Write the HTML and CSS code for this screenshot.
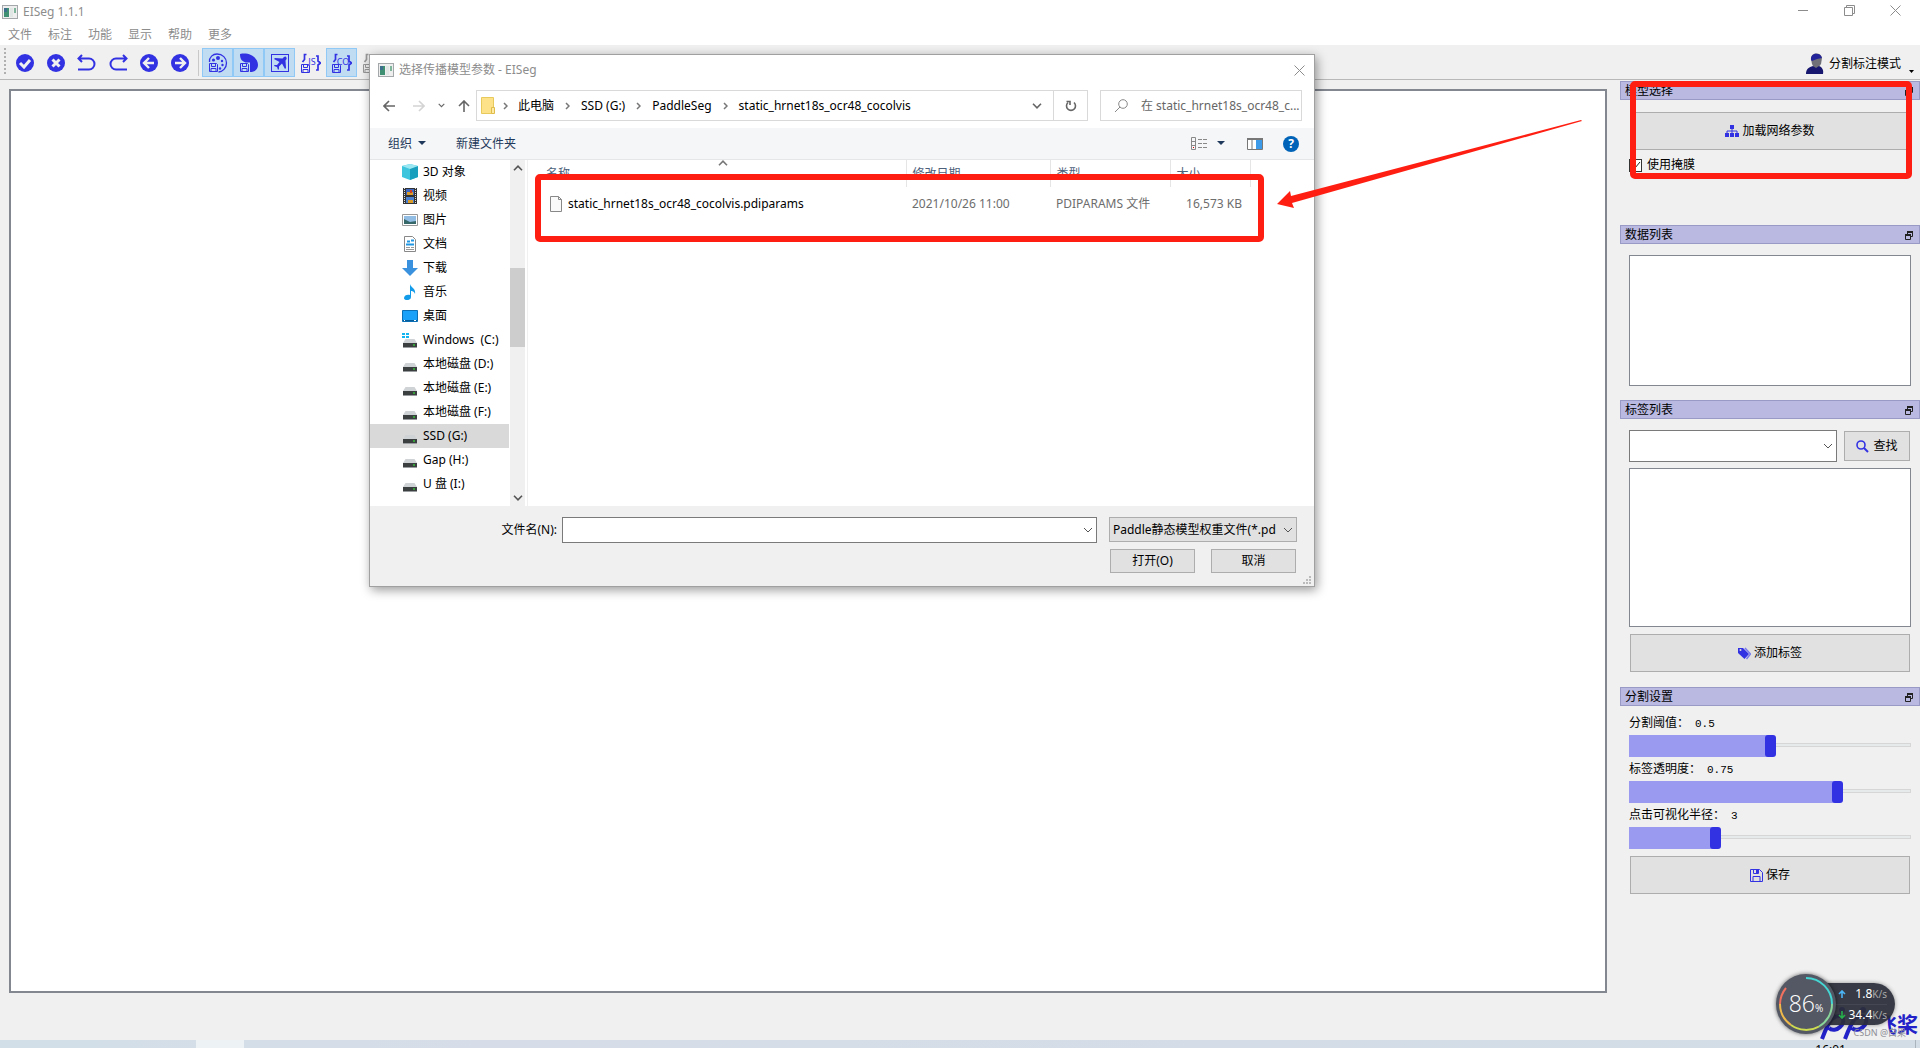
FILE: index.html
```html
<!DOCTYPE html>
<html lang="zh-CN">
<head>
<meta charset="utf-8">
<title>EISeg 1.1.1</title>
<link rel="stylesheet" href="styles.css">
</head>
<body>
<svg class="sprite" aria-hidden="true">
  <symbol id="app" viewBox="0 0 16 14"><rect x=".5" y=".5" width="15" height="13" fill="#eee" stroke="#a4a8ab"/><rect x="2" y="3" width="5" height="9" fill="#3f8f72"/><rect x="2" y="3" width="3" height="4" fill="#3d6f8c"/><rect x="8" y="3" width="3" height="9" fill="#dfe6e4"/><rect x="12" y="3" width="2" height="5" fill="#7fb59b"/></symbol>
  <symbol id="close" viewBox="0 0 11 11"><path d="M.5.5l10 10M10.5.5l-10 10" stroke="#8c8c8c" fill="none"/></symbol>
  <symbol id="ok" viewBox="0 0 18 18"><circle cx="9" cy="9" r="9" fill="#3232e3"/><path d="M4 9l4 4 6-7" stroke="#f0f0f0" stroke-width="3" fill="none"/></symbol>
  <symbol id="no" viewBox="0 0 18 18"><circle cx="9" cy="9" r="9" fill="#3232e3"/><path d="M5.500 5.500l7 7m0-7l-7 7" stroke="#f0f0f0" stroke-width="3" fill="none"/></symbol>
  <symbol id="undo" viewBox="0 0 20 18"><path d="M5 1L1.500 4.500 5 8M2 4.500h10a5.500 5.500 0 0 1 0 11H1" stroke="#3232e3" stroke-width="2" fill="none"/></symbol>
  <symbol id="redo" viewBox="0 0 20 18"><path d="M15 1l3.500 3.500L15 8M18 4.500H8a5.500 5.500 0 0 0 0 11h11" stroke="#3232e3" stroke-width="2" fill="none"/></symbol>
  <symbol id="prev" viewBox="0 0 18 18"><circle cx="9" cy="9" r="9" fill="#3232e3"/><path d="M14 9H5m4-5L4 9l5 5" stroke="#f0f0f0" stroke-width="2.400" fill="none"/></symbol>
  <symbol id="next" viewBox="0 0 18 18"><circle cx="9" cy="9" r="9" fill="#3232e3"/><path d="M4 9h9M9 4l5 5-5 5" stroke="#f0f0f0" stroke-width="2.400" fill="none"/></symbol>
  <symbol id="disk" viewBox="0 0 9 9"><path d="M.5.5h7l1 1v7h-8zM2.500.5v3h4v-3M2 8.500v-3h5v3" fill="none" stroke="currentColor"/></symbol>
  <symbol id="palette" viewBox="0 0 20 20"><path d="M1.500 9C1 4 5 1 9 1c5.500 0 9.500 4 9.500 9s-4 9-8 9" fill="none" stroke="#3232e3" stroke-width="1.300"/><circle cx="5.500" cy="7" r="1.600" fill="#3232e3"/><circle cx="10" cy="5" r="2" fill="#3232e3"/><circle cx="14" cy="8" r="1.200" fill="#3232e3"/><circle cx="14.500" cy="12" r="1.200" fill="#3232e3"/><circle cx="12" cy="15.500" r="1.200" fill="#3232e3"/><use href="#disk" x="1" y="10" width="9" height="9"/></symbol>
  <symbol id="mask" viewBox="0 0 20 20"><path d="M1 1C10-1 19 4 19 12c0 4-3 7-8 7V9.500H6.500C2 8 1 5 1 1z" fill="#3232e3"/><use href="#disk" x="1" y="10" width="9" height="9"/></symbol>
  <symbol id="plane" viewBox="0 0 18 18"><rect x=".5" y=".5" width="17" height="17" fill="none" stroke="#3232e3"/><path d="M15 3c-1-1-2 0-3.500 1.500L4 4 3 5l5.500 3L6 11H3.500L3 12l3 1 1 3 1-1v-2.500L11 9.500 14 15l1-1-.5-7.500C16 5 16 4 15 3z" fill="#3232e3"/></symbol>
  <symbol id="braces" viewBox="0 0 20 20"><path d="M5.500 1.500H3.500v5L1.500 9M15 3h2v5l2.500 2L17 12v5h-2" fill="none" stroke="currentColor" stroke-width="1.700"/><use href="#disk" x="0" y="11" width="9" height="9"/></symbol>
  <symbol id="float" viewBox="0 0 8 9"><path d="M2.500 3V1H7.500v4.500h-2M.5 3.500h5v5h-5z" fill="none" stroke="#222"/><path d="M2 1h6M0 4h6" stroke="#222" stroke-width="2"/></symbol>
  <symbol id="drive" viewBox="0 0 16 16"><path d="M3.500 7h9l2.500 4H1z" fill="#d0d3d6"/><rect x="1" y="11" width="14" height="4" fill="#3c3f40"/><path d="M1 15.500h14" stroke="#9a9d9f"/><rect x="11" y="12.500" width="2" height="1" fill="#3f3"/></symbol>
  <symbol id="sep" viewBox="0 0 5 8"><path d="M1 1l3 3-3 3" fill="none" stroke="#777" stroke-width="1.500"/></symbol>
  <symbol id="down" viewBox="0 0 10 6"><path d="M1 .8l4 4 4-4" fill="none" stroke="currentColor" stroke-width="1.600"/></symbol>
</svg>

<header class="titlebar">
  <svg class="app-icon"><use href="#app"/></svg>
  <span>EISeg 1.1.1</span>
  <div class="window-buttons">
    <button aria-label="最小化"><svg width="11" height="11"><path d="M0 5.500h10" stroke="#8c8c8c"/></svg></button>
    <button aria-label="还原"><svg width="11" height="11"><path d="M2.500 2.500v-2h8v8h-2M.5 2.500h8v8h-8z" stroke="#8c8c8c" fill="none"/></svg></button>
    <button aria-label="关闭"><svg width="11" height="11"><use href="#close"/></svg></button>
  </div>
</header>
<nav class="menu"><a href="#">文件</a><a href="#">标注</a><a href="#">功能</a><a href="#">显示</a><a href="#">帮助</a><a href="#">更多</a></nav>

<div class="toolbar">
  <i class="grip"></i>
  <button aria-label="完成"><svg class="i18"><use href="#ok"/></svg></button>
  <button aria-label="清除"><svg class="i18"><use href="#no"/></svg></button>
  <button aria-label="撤销"><svg class="i20"><use href="#undo"/></svg></button>
  <button aria-label="重做"><svg class="i20"><use href="#redo"/></svg></button>
  <button aria-label="上一张"><svg class="i18"><use href="#prev"/></svg></button>
  <button aria-label="下一张"><svg class="i18"><use href="#next"/></svg></button>
  <i class="rule"></i>
  <button class="on" aria-label="伪彩色"><svg class="i20"><use href="#palette"/></svg></button>
  <button class="on" aria-label="灰度"><svg class="i20"><use href="#mask"/></svg></button>
  <button class="on" aria-label="抠图"><svg class="i18"><use href="#plane"/></svg></button>
  <button class="format"><svg class="i20"><use href="#braces"/></svg><span>JS</span></button>
  <button class="format on"><svg class="i20"><use href="#braces"/></svg><span>CO</span></button>
  <button class="format muted" aria-label="XML"><svg class="i20"><use href="#braces"/></svg></button>
  <button class="mode">
    <svg width="18" height="21" viewBox="0 0 18 21"><path d="M5 6c0-7 10-7 11-1l-1 6-3 4H8L6 11z" fill="#707078"/><path d="M5 7C4-1 15-1 16 5l-5 1-5 2z" fill="#24249a"/><path d="M0 21c0-5 3-7 7-8l3 2 3-2c3 1 5 4 4 8z" fill="#17176f"/></svg>
    <span>分割标注模式</span><svg class="tick" width="5" height="3"><path d="M0 0h5L2.500 3z"/></svg>
  </button>
</div>

<main class="workspace">
  <section class="canvas"></section>
  <aside class="docks">
    <section class="dock dock-model">
      <h2>模型选择<svg><use href="#float"/></svg></h2>
      <div class="dock-body">
        <button class="big"><svg width="14" height="12"><path d="M5 0h4v4H5zM0 8h4v4H0zM5 8h4v4H5zM10 8h4v4h-4z" fill="#3232e3"/><path d="M2 8V6h10v2M7 4v4" stroke="#3232e3" fill="none"/></svg>加载网络参数</button>
        <label class="check"><input type="checkbox" checked>使用掩膜</label>
      </div>
      <div class="highlight"></div>
    </section>
    <section class="dock dock-data">
      <h2>数据列表<svg><use href="#float"/></svg></h2>
      <div class="dock-body"><div class="list short"></div></div>
    </section>
    <section class="dock dock-labels">
      <h2>标签列表<svg><use href="#float"/></svg></h2>
      <div class="dock-body">
        <div class="find"><select aria-label="标签"><option></option></select>
        <button><svg width="13" height="13"><circle cx="5" cy="5" r="4" fill="none" stroke="#3232e3" stroke-width="1.600"/><path d="M8 8l4 4" stroke="#3232e3" stroke-width="2"/></svg>查找</button></div>
        <div class="list tall"></div>
        <button class="big"><svg width="13" height="13"><path d="M7 1l5.500 6-4 5" stroke="#7777ee" stroke-width="1.500" fill="none"/><path d="M0 1h5l6 6-4.500 5L0 6z" fill="#3232e3"/><circle cx="2.500" cy="3" r="1" fill="#e1e1e1"/></svg>添加标签</button>
      </div>
    </section>
    <section class="dock">
      <h2>分割设置<svg><use href="#float"/></svg></h2>
      <div class="dock-body sliders">
        <label for="thr">分割阈值：<output>0.5</output></label>
        <input id="thr" type="range" min="0" max="1" step="0.01" value="0.5" style="--v:0.5">
        <label for="opa">标签透明度：<output>0.75</output></label>
        <input id="opa" type="range" min="0" max="1" step="0.01" value="0.75" style="--v:0.75">
        <label for="rad">点击可视化半径：<output>3</output></label>
        <input id="rad" type="range" min="0" max="10" value="3" style="--v:0.3">
        <button class="big"><svg width="13" height="13"><path d="M.5.5h9l3 3v9h-12zM3.500.5v4h5v-4M3 12.500v-5h7v5" fill="none" stroke="#3232e3"/><path d="M6 1h2v3H6z" fill="#3232e3"/></svg>保存</button>
      </div>
    </section>
  </aside>
</main>

<footer class="taskbar"><i class="task"></i><time>16:01</time></footer>

<div class="corner">
  <div class="brand"><svg width="58" height="34" viewBox="0 0 58 34"><path d="M4 33C8 22 12 14 17 9M14 13c10-8 15 2 8 8-3 3-8 4-11 1M27 33c4-11 8-19 13-24M37 13c10-8 15 2 8 8-3 3-8 4-11 1" fill="none" stroke="#2222c8" stroke-width="4"/><circle cx="24" cy="4" r="3" fill="#2222c8"/><circle cx="45" cy="4" r="3" fill="#2222c8"/></svg><span>飞桨</span></div>
  <div class="speed">
    <div><svg width="8" height="8"><path d="M4 8V1M1 4l3-3 3 3" stroke="#4bb4f5" stroke-width="1.600" fill="none"/></svg><b>1.8</b><span>K/s</span></div>
    <div><svg width="8" height="8"><path d="M4 0v7M1 4l3 3 3-3" stroke="#27b04c" stroke-width="1.600" fill="none"/></svg><b>34.4</b><span>K/s</span></div>
  </div>
  <div class="dial">
    <svg width="60" height="60"><g fill="none" stroke-width="2"><path d="M30 4a26 26 0 0 1 26 26" stroke="#45d5d2"/><path d="M56 30a26 26 0 0 1-13 22.500" stroke="#8ad69a"/><path d="M43 52.500A26 26 0 0 1 15 51" stroke="#cddc50"/><path d="M15 51A26 26 0 0 1 4 30" stroke="#eeb94a"/><path d="M4 30a26 26 0 0 1 6-16" stroke="#f0715f"/></g></svg>
    <span>86<small>%</small></span>
  </div>
  <span class="watermark">CSDN @白果</span>
</div>

<div class="dialog" role="dialog" aria-label="选择传播模型参数">
  <div class="dlg-title"><svg class="app-icon"><use href="#app"/></svg><span>选择传播模型参数 - EISeg</span><button aria-label="关闭"><svg width="11" height="11"><use href="#close"/></svg></button></div>
  <div class="address">
    <div class="nav">
      <button aria-label="后退"><svg width="12" height="12"><path d="M12 6H1m5-5L1 6l5 5" fill="none" stroke="#666" stroke-width="1.600"/></svg></button>
      <button aria-label="前进"><svg width="12" height="12"><path d="M0 6h11M6 1l5 5-5 5" fill="none" stroke="#d4d4d4" stroke-width="1.600"/></svg></button>
      <button aria-label="历史"><svg width="7" height="5" class="grey"><use href="#down"/></svg></button>
      <button aria-label="上级"><svg width="12" height="12"><path d="M6 12V1M1 6l5-5 5 5" fill="none" stroke="#666" stroke-width="1.600"/></svg></button>
    </div>
    <div class="path">
      <svg width="14" height="17"><path d="M.5.5h12v16H.5z" fill="#fde28a" stroke="#e8c95c"/><path d="M10.500 16.500v-6h3v6z" fill="#fdeaa5" stroke="#e0bd4a"/></svg>
      <svg class="sep first"><use href="#sep"/></svg><a href="#">此电脑</a>
      <svg class="sep"><use href="#sep"/></svg><a href="#">SSD (G:)</a>
      <svg class="sep"><use href="#sep"/></svg><a href="#">PaddleSeg</a>
      <svg class="sep"><use href="#sep"/></svg><a href="#">static_hrnet18s_ocr48_cocolvis</a>
      <button class="drop" aria-label="以前的位置"><svg width="10" height="6" class="grey"><use href="#down"/></svg></button>
      <button class="refresh" aria-label="刷新"><svg width="12" height="12"><path d="M3 2.500a4.500 4.500 0 1 0 6 0" fill="none" stroke="#666" stroke-width="1.600"/><path d="M1.500 1.500H5V5" fill="none" stroke="#666" stroke-width="1.600"/></svg></button>
    </div>
    <label class="search"><svg width="13" height="13"><circle cx="8" cy="5" r="4.300" fill="none" stroke="#888"/><path d="M5 8l-5 5" stroke="#888"/></svg><input type="text" aria-label="搜索" placeholder="在 static_hrnet18s_ocr48_c..."></label>
  </div>
  <div class="commands">
    <button>组织<svg width="8" height="5"><path d="M0 0h8L4 4z" fill="#1e395b"/></svg></button>
    <button>新建文件夹</button>
    <button class="view" aria-label="视图"><svg width="17" height="13"><path d="M.5.5h4v12h-4zM0 4.500h5M0 8.500h5M7 2.500h4m1 0h4M7 6.500h4m1 0h4M7 10.500h4m1 0h4" fill="none" stroke="#888"/><path d="M2 10h1v1H2z" fill="#d00"/></svg></button>
    <button class="more" aria-label="更多视图"><svg width="8" height="5"><path d="M0 0h8L4 4z" fill="#1e395b"/></svg></button>
    <button class="pane" aria-label="预览"><svg width="16" height="12"><path d="M.5.5h15v11H.5zM5 1v10" fill="#fff" stroke="#777"/><path d="M9 2h6v9H9z" fill="#3c9ae8"/><path d="M0 1h16" stroke="#777" stroke-width="2"/></svg></button>
    <button class="help" aria-label="帮助">?</button>
  </div>
  <div class="browser">
    <ul class="places">
      <li><svg><path d="M0 2l8-2 8 2v11l-8 3-8-3z" fill="#3cc5dd"/><path d="M8 4l8-2v11l-8 3z" fill="#189fbd"/><path d="M0 2l8-2 8 2-8 3z" fill="#9be8f2"/></svg>3D 对象</li>
      <li><svg><path d="M1 0h14v16H1z" fill="#333"/><path d="M2.500 0v16M13.500 0v16" stroke="#ddd" stroke-dasharray="1 1"/><path d="M4 1h8v6H4z" fill="#3e67bd"/><path d="M4 9h8v6H4z" fill="#4b80cf"/><path d="M5 4h6v3H5zM6 12h5v3H6z" fill="#dc9d28"/><path d="M8 2h2v3H8z" fill="#cf3d25"/></svg>视频</li>
      <li><svg><path d="M.5 2.500h15v11H.5z" fill="#fff" stroke="#999"/><path d="M2 4h12v8H2z" fill="#91bce4"/><path d="M2 7l6 3 6-1v3H2z" fill="#36686a"/></svg>图片</li>
      <li><svg><path d="M2.500.5h8l3 3v12h-11z" fill="#fff" stroke="#888"/><path d="M5 5.500h3M9 4.500h3M4 8.500h8" stroke="#2196e3" stroke-width="2"/><path d="M4 11.500h4M9 11.500h3M4 13.500h8" stroke="#999"/></svg>文档</li>
      <li><svg><path d="M5 0h6v8h5l-8 8-8-8h5z" fill="#3a92de"/></svg>下载</li>
      <li><svg><path d="M8 0c1 4 6 4 5 10-1-3-3-3-4-3v6c0 4-7 4-7 1s4-4 6-3z" fill="#129be8"/></svg>音乐</li>
      <li><svg><path d="M.5 2.500h15v11H.5z" fill="#19a0f8" stroke="#0b6fb5"/><path d="M1 12.500h14" stroke="#065b99"/><path d="M2 12.500h1m9 0h2" stroke="#fff"/></svg>桌面</li>
      <li><svg><use href="#drive" width="16" height="16"/><path d="M0 1h3v2H0zM4 1h3v2H4zM0 4h3v2H0zM4 4h3v2H4z" fill="#14b4f0"/></svg>Windows&nbsp; (C:)</li>
      <li><svg><use href="#drive"/></svg>本地磁盘 (D:)</li>
      <li><svg><use href="#drive"/></svg>本地磁盘 (E:)</li>
      <li><svg><use href="#drive"/></svg>本地磁盘 (F:)</li>
      <li class="current"><svg><use href="#drive"/></svg>SSD (G:)</li>
      <li><svg><use href="#drive"/></svg>Gap (H:)</li>
      <li><svg><use href="#drive"/></svg>U 盘 (I:)</li>
    </ul>
    <div class="scroll"><svg class="up" width="10" height="6"><use href="#down"/></svg><i></i><svg width="10" height="6"><use href="#down"/></svg></div>
    <div class="files">
      <table>
        <colgroup><col class="c-name"><col class="c-date"><col class="c-type"><col class="c-size"><col></colgroup>
        <thead><tr><th>名称<svg class="sort" width="10" height="6"><use href="#down"/></svg></th><th>修改日期</th><th>类型</th><th>大小</th><th></th></tr></thead>
        <tbody><tr><td><span class="file"><svg width="12" height="16"><path d="M.5.5h8l3 3v12H.5z" fill="#fafafa" stroke="#888"/><path d="M8.500.5v3h3" fill="none" stroke="#888"/></svg>static_hrnet18s_ocr48_cocolvis.pdiparams</span></td><td>2021/10/26 11:00</td><td>PDIPARAMS 文件</td><td class="num">16,573 KB</td><td></td></tr></tbody>
      </table>
      <div class="highlight"></div>
    </div>
  </div>
  <form class="dlg-foot">
    <label for="fname">文件名(N):</label>
    <select id="fname"><option></option></select>
    <div class="actions">
      <select class="type" aria-label="文件类型"><option>Paddle静态模型权重文件(*.pd</option></select>
      <button type="button">打开(O)</button><button type="button">取消</button>
    </div>
  </form>
  <svg class="resize" width="8" height="8"><path d="M6 0h2v2H6zM3 3h2v2H3zM6 3h2v2H6zM0 6h2v2H0zM3 6h2v2H3zM6 6h2v2H6z" fill="#bbb"/></svg>
  <svg class="arrow" width="306" height="92"><path d="M0 84l13-13 1 5L304 0l1 1L15 83l2 5z" fill="#ff1f12"/></svg>
</div>
</body>
</html>
```
FILE: styles.css
```css
* { box-sizing: border-box; }
body {
  margin: 0;
  min-height: 100vh;
  display: flex;
  flex-direction: column;
  position: relative;
  overflow: hidden;
  background: #f0f0f0;
  color: #000;
  font: 12px/16px "Noto Sans", "Noto Sans CJK SC", sans-serif;
}
.sprite { position: absolute; width: 0; height: 0; }
button, select, input { font: inherit; color: inherit; margin: 0; }
button { padding: 0; border: 0; background: none; display: flex; align-items: center; justify-content: center; }
a { color: inherit; text-decoration: none; }
svg { flex: none; display: block; }
.i18 { width: 18px; height: 18px; }
.i20 { width: 20px; height: 20px; }
.app-icon { width: 16px; height: 14px; }
.grey { color: #666; }

.titlebar { display: flex; align-items: center; gap: 5px; height: 24px; padding-left: 2px; background: #fff; color: #8c8c8c; }
.window-buttons { display: flex; margin-left: auto; padding: 0 2px 4px 0; }
.window-buttons button { width: 46px; height: 20px; }
.menu { display: flex; gap: 16px; height: 23px; padding: 3px 8px; background: #fff; color: #8c8c8c; border-bottom: 2px solid #f0f0f0; }

.toolbar { display: flex; align-items: flex-start; height: 33px; padding-top: 1px; border-bottom: 1px solid #b8b8b8; color: #3232e3; }
.grip { width: 2px; height: 28px; margin: 0 3px 0 4px; background: repeating-linear-gradient(#b0b0b0 0 2px, transparent 2px 4px); }
.rule { width: 1px; height: 26px; margin: 2px 3px 0 3px; background: #c8c8c8; }
.toolbar button { width: 31px; height: 29px; border: 1px solid transparent; }
.toolbar .on { background: #c0dcf3; border-color: #90c8f6; }
.format { position: relative; }
.format span { position: absolute; left: 0; right: 0; top: 6px; padding-left: 3px; text-align: center; font-size: 9px; line-height: 14px; }
.toolbar .muted { color: #999; }
.toolbar .mode { position: relative; width: auto; height: 31px; gap: 5px; margin-left: auto; padding-right: 18px; color: #000; }
.tick { position: absolute; right: 5px; bottom: 5px; }

.workspace { flex: 1; display: grid; grid-template-columns: 1fr 300px; gap: 13px; padding-left: 9px; }
.canvas { margin: 9px 0 47px; background: #fff; border: 2px solid #828790; }
.docks { padding-top: 1px; }
.dock { position: relative; }
.dock h2 { display: flex; justify-content: space-between; align-items: center; margin: 0; height: 19px; padding: 1px 6px 0 4px; background: #b9b9e1; border: 1px solid #9a9ac6; font-size: 12px; font-weight: 400; line-height: 16px; }
.dock h2 svg { width: 8px; height: 9px; }
.dock-body { padding: 11px 9px 14px; }
.dock-model .dock-body { padding-top: 12px; height: 125px; }
.dock-labels .dock-body { padding-bottom: 15px; }
.big, .find button { background: #e1e1e1; border: 1px solid #adadad; gap: 3px; }
.find button { gap: 4px; }
.big { width: calc(100% - 2px); height: 38px; margin: 0 1px; }
.check { display: flex; align-items: center; gap: 5px; margin-top: 7px; }
.check input { appearance: none; width: 13px; height: 13px; border: 1px solid #333; background: #fff url("data:image/svg+xml,%3Csvg xmlns='http://www.w3.org/2000/svg' viewBox='0 0 11 11'%3E%3Cpath d='M2 5l3 3 5-6' fill='none' stroke='%23222'/%3E%3C/svg%3E"); }
.highlight { position: absolute; border: 6px solid #ff1f12; border-radius: 5px; }
.dock .highlight { left: 10px; right: 8px; top: 0; height: 98px; }
.list { background: #fff; border: 1px solid #828790; }
.short { height: 131px; }
.tall { height: 159px; margin: 6px 0 7px; }
.find { display: flex; align-items: center; gap: 7px; }
.find button { width: 66px; height: 30px; margin-right: 1px; }
select { appearance: none; border: 1px solid #7a7a7a; border-radius: 0; background: #fff url("data:image/svg+xml,%3Csvg xmlns='http://www.w3.org/2000/svg' width='10' height='6'%3E%3Cpath d='M1 1l4 4 4-4' fill='none' stroke='%23555'/%3E%3C/svg%3E") no-repeat right 3px center; }
.find select { flex: 1; height: 32px; }
.sliders { padding-top: 9px; }
.sliders label { display: block; height: 16px; margin-bottom: 4px; }
.sliders output { margin-left: 6px; font: 11px/16px "Liberation Mono", monospace; }
.sliders input {
  appearance: none; display: block; width: 100%; height: 22px; margin-bottom: 4px;
  background:
    linear-gradient(#9a9af0, #9a9af0) 0 0 / calc((100% - 11px) * var(--v) + 4px) 22px no-repeat,
    linear-gradient(#e7eaea, #e7eaea) 0 9px / calc(100% - 1px) 2px no-repeat,
    linear-gradient(#d6d6d6, #d6d6d6) 0 8px / 100% 4px no-repeat;
}
.sliders input::-webkit-slider-thumb { appearance: none; width: 11px; height: 22px; border-radius: 3px; background: #3232e3; }
.sliders input:last-of-type { margin-bottom: 7px; }

.taskbar { display: flex; align-items: flex-start; justify-content: space-between; height: 8px; overflow: hidden; background: linear-gradient(90deg, #d2dfe8, #d6dde8 25%, #d2dde6); }
.task { width: 48px; height: 8px; margin-left: 196px; background: #edf2f5; }
.taskbar time { padding: 2px 69px 0 0; border-right: 1px solid #a9b4bd; margin-right: 4px; }

.corner { position: absolute; right: 0; bottom: 8px; width: 144px; height: 66px; }
.brand { position: absolute; right: 0; bottom: 0; display: flex; align-items: flex-end; color: #2222c8; font: 700 21px/28px "Noto Sans CJK SC", sans-serif; }
.brand span { padding: 0 2px 3px 0; }
.speed { position: absolute; left: 30px; top: 9px; width: 89px; height: 42px; padding-right: 8px; border-radius: 0 21px 21px 0; background: rgba(42, 45, 56, .93); color: #fff; box-shadow: 0 0 4px rgba(0, 0, 0, .4); }
.speed div { display: flex; align-items: center; height: 21px; padding-left: 32px; }
.speed div + div { border-top: 1px solid #454852; }
.speed b { flex: 1; text-align: right; font-weight: 400; }
.speed span { font-size: 10px; color: #aaa; }
.dial { position: absolute; left: 0; top: 0; width: 60px; height: 60px; border-radius: 50%; background: #535864; box-shadow: 0 0 4px rgba(0, 0, 0, .6); color: #fff; }
.dial span { position: absolute; inset: 0; text-align: center; font: 300 23px/58px "Open Sans", sans-serif; }
.dial small { font-size: 10px; font-weight: 400; }
.watermark { position: absolute; right: 14px; bottom: 0; font-size: 9px; line-height: 14px; color: #8e8e96; }

.dialog { position: absolute; left: 369px; top: 54px; width: 946px; background: #fff; border: 1px solid #a0a0a0; box-shadow: 2px 3px 10px rgba(0, 0, 0, .4); }
.dlg-title { display: flex; align-items: center; gap: 5px; height: 30px; padding: 0 9px 0 8px; color: #8c8c8c; }
.dlg-title button { margin-left: auto; }
.address { display: flex; align-items: center; height: 43px; padding: 5px 12px 7px 13px; }
.nav { display: flex; align-items: center; width: 93px; }
.nav button + button { margin-left: 18px; }
.nav button:nth-child(n+3) { margin-left: 13px; }
.path { flex: 1; display: flex; align-items: center; height: 31px; padding-left: 4px; border: 1px solid #d9d9d9; }
.sep { width: 5px; height: 8px; margin: 0 11px; }
.sep.first { margin: 0 10px 0 8px; }
.path a { line-height: 24px; }
.path .drop { width: 32px; margin-left: auto; }
.path .refresh { width: 34px; height: 29px; border-left: 1px solid #d9d9d9; }
.search { display: flex; align-items: center; gap: 13px; width: 202px; height: 31px; margin-left: 12px; padding-left: 14px; border: 1px solid #d9d9d9; }
.search input { width: 100%; min-width: 0; padding: 0; border: 0; outline: 0; }
.search input::placeholder { color: #666; }
.commands { display: flex; align-items: center; height: 32px; padding: 0 15px 0 18px; background: #f5f6f7; border-bottom: 1px solid #e5e6e8; color: #1e395b; }
.commands button { gap: 6px; margin-right: 30px; }
.commands .view { margin: 0 9px 0 auto; }
.commands .more { margin-right: 22px; }
.commands .pane { margin-right: 20px; }
.commands .help { width: 16px; height: 16px; margin: 0; border-radius: 50%; background: #0063b8; color: #fff; font-weight: 700; }

.browser { display: flex; height: 346px; }
.places { width: 139px; margin: 0; padding: 0; list-style: none; }
.places li { display: flex; align-items: center; gap: 5px; height: 24px; padding-left: 32px; white-space: nowrap; }
.places svg { width: 16px; height: 16px; }
.places .current { background: #d9d9d9; }
.scroll { display: flex; flex-direction: column; align-items: center; justify-content: space-between; width: 15px; margin-left: 1px; padding: 5px 0; background: #f0f0f0; color: #555; }
.scroll i { width: 15px; height: 79px; margin: 0 0 52px; background: #cdcdcd; }
.up, .sort { transform: rotate(180deg); }
.files { position: relative; flex: 1; margin-left: 2px; border-left: 1px solid #f0f0f0; }
table { width: 100%; table-layout: fixed; border-collapse: collapse; color: #6d6d6d; }
.c-name { width: 378px; }
.c-date { width: 144px; }
.c-type { width: 120px; }
.c-size { width: 80px; }
th { position: relative; height: 27px; padding: 0 6px; border-right: 1px solid #e5e5e5; text-align: left; font-weight: 400; color: #4c607a; }
th:first-child { padding-left: 18px; }
th:last-child { border: 0; }
.sort { position: absolute; left: 190px; top: 0; color: #777; }
td { height: 33px; padding: 0 6px; white-space: nowrap; }
td:first-child { padding-left: 22px; }
.file { display: flex; align-items: center; gap: 6px; color: #000; }
.num { padding-right: 8px; text-align: right; }
.files .highlight { left: 7px; top: 14px; width: 729px; height: 68px; }

.dlg-foot { display: flex; align-items: flex-start; height: 80px; padding: 11px 17px 0 130px; background: #f0f0f0; }
.dlg-foot label { width: 62px; padding-right: 5px; text-align: right; line-height: 26px; white-space: nowrap; }
.dlg-foot > select { flex: 1; height: 26px; margin-right: 12px; }
.actions { display: grid; grid-template-columns: 86px 86px; justify-content: space-between; gap: 7px 0; width: 188px; padding: 0; }
.actions select { grid-column: 1 / -1; height: 25px; padding: 0 18px 0 3px; border-color: #adadad; background-color: #e1e1e1; }
.actions button { height: 24px; background: #e1e1e1; border: 1px solid #adadad; }
.actions button:nth-of-type(1) { margin-left: 1px; }
.actions button:nth-of-type(2) { margin-right: 1px; }
.resize { position: absolute; right: 3px; bottom: 2px; }
.arrow { position: absolute; left: 907px; top: 65px; }
```
